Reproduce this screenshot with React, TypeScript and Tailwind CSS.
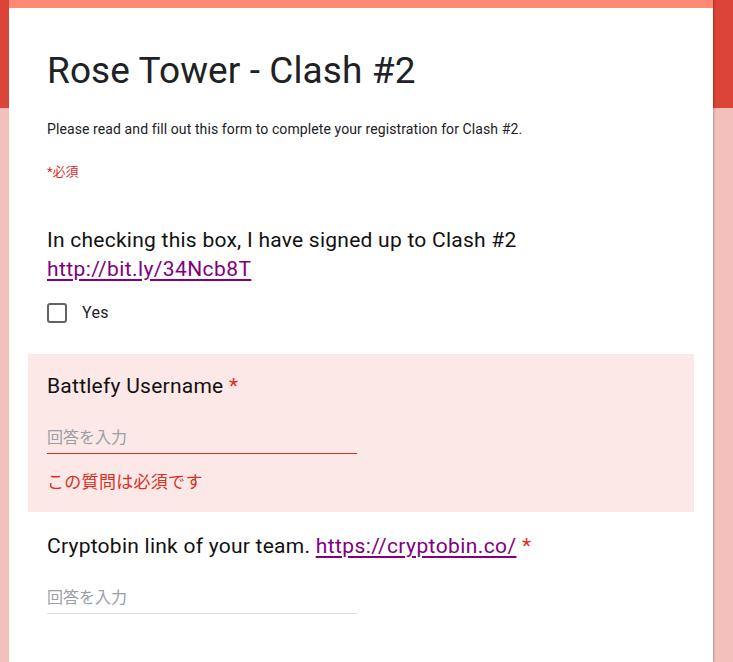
import React from "react";

const roboto = { fontFamily: "Roboto, 'Noto Sans CJK JP', sans-serif" };

export default function App() {
  return (
    <div
      className="min-h-screen w-full bg-[linear-gradient(#db4437_0px,#db4437_108px,#f4c0bb_108px,#f4c0bb_100%)]"
      style={roboto}
    >
      <div className="ml-[9px] w-[704px] min-h-[662px] bg-white border-t-8 border-[#ff8a73] shadow-[1px_0_2px_rgba(0,0,0,0.25)] px-[19px]">
        {/* Header */}
        <div className="px-[19px] pt-[41px]">
          <h1 className="text-[37px] leading-[44px] text-[#202124] font-normal tracking-[0.1px]">
            Rose Tower - Clash #2
          </h1>
          <p className="mt-[26px] text-[14px] leading-[20px] text-[#202124] tracking-[0.1px]">
            Please read and fill out this form to complete your registration for Clash #2.
          </p>
          <p className="mt-[23px] text-[13px] leading-[20px] text-[#d93025]">*必須</p>
        </div>

        {/* Question 1 */}
        <div className="px-[19px] pt-[44px] pb-[31px]">
          <div className="text-[21px] leading-[29px] text-[#111111] tracking-[0.25px]">
            In checking this box, I have signed up to Clash #2
            <br />
            <a href="#" className="text-[#800080] underline underline-offset-[3px] tracking-[0.4px]">
              http://bit.ly/34Ncb8T
            </a>
          </div>
          <label className="mt-[19px] flex items-center gap-[15px]">
            <span className="w-[20px] h-[20px] rounded-[3px] border-2 border-[#5f6368] box-border" />
            <span className="text-[16px] leading-[20px] text-[#202124] tracking-[0.3px]">Yes</span>
          </label>
        </div>

        {/* Question 2 (error) */}
        <div className="bg-[#fce8e6] px-[19px] pt-[18px] pb-[18px]">
          <div className="text-[21px] leading-[29px] text-[#111111] tracking-[0.25px]">
            Battlefy Username <span className="text-[#d93025]">*</span>
          </div>
          <div className="mt-[25px] w-[310px] border-b border-[#d93025] pb-[3px] text-[16px] leading-[24px] text-[#9aa0a6]">
            回答を入力
          </div>
          <div className="mt-[16px] text-[17px] leading-[24px] text-[#d93025] tracking-[0.3px]">
            この質問は必須です
          </div>
        </div>

        {/* Question 3 */}
        <div className="px-[19px] pt-[20px]">
          <div className="text-[21px] leading-[29px] text-[#111111] tracking-[0.25px]">
            Cryptobin link of your team.{" "}
            <a href="#" className="text-[#800080] underline underline-offset-[3px] tracking-[0.4px]">
              https://cryptobin.co/
            </a>{" "}
            <span className="text-[#d93025]">*</span>
          </div>
          <div className="mt-[25px] w-[310px] border-b border-[#dadce0] pb-[3px] text-[16px] leading-[24px] text-[#9aa0a6]">
            回答を入力
          </div>
        </div>
      </div>
    </div>
  );
}
